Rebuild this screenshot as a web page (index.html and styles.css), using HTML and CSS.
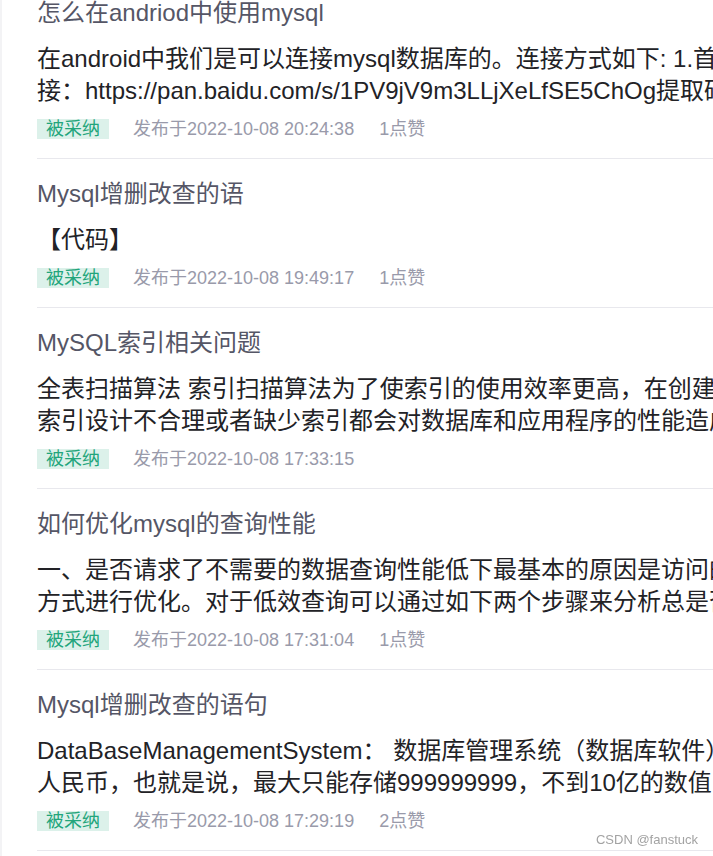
FILE: index.html
```html
<!DOCTYPE html>
<html lang="zh-CN">
<head>
  <meta charset="UTF-8">
  <meta name="viewport" content="width=device-width, initial-scale=1.0">
  <title>相关问答</title>
  <link rel="stylesheet" href="styles.css">
</head>
<body>
  <div class="answer-list">
    <div class="answer-item">
      <div class="answer-title">怎么在andriod中使用mysql</div>
      <div class="answer-desc">
        <p>在android中我们是可以连接mysql数据库的。连接方式如下: 1.首先下载mysql的驱动jar包，链</p>
        <p>接：https://pan.baidu.com/s/1PV9jV9m3LLjXeLfSE5ChOg提取码：mysq</p>
      </div>
      <div class="answer-meta">
        <span class="tag-adopted">被采纳</span>
        <span class="meta-time">发布于2022-10-08 20:24:38</span>
        <span class="meta-like">1点赞</span>
      </div>
    </div>

    <div class="answer-item">
      <div class="answer-title">Mysql增删改查的语</div>
      <div class="answer-desc">
        <p>【代码】</p>
      </div>
      <div class="answer-meta">
        <span class="tag-adopted">被采纳</span>
        <span class="meta-time">发布于2022-10-08 19:49:17</span>
        <span class="meta-like">1点赞</span>
      </div>
    </div>

    <div class="answer-item">
      <div class="answer-title">MySQL索引相关问题</div>
      <div class="answer-desc">
        <p>全表扫描算法 索引扫描算法为了使索引的使用效率更高，在创建索引时，必须考虑在哪些字段上</p>
        <p>索引设计不合理或者缺少索引都会对数据库和应用程序的性能造成障碍。高效的索引对于获得良好</p>
      </div>
      <div class="answer-meta">
        <span class="tag-adopted">被采纳</span>
        <span class="meta-time">发布于2022-10-08 17:33:15</span>
      </div>
    </div>

    <div class="answer-item">
      <div class="answer-title">如何优化mysql的查询性能</div>
      <div class="answer-desc">
        <p>一、是否请求了不需要的数据查询性能低下最基本的原因是访问的数据太多。大部分性能低下的</p>
        <p>方式进行优化。对于低效查询可以通过如下两个步骤来分析总是否有效：确认应用程序是否在检</p>
      </div>
      <div class="answer-meta">
        <span class="tag-adopted">被采纳</span>
        <span class="meta-time">发布于2022-10-08 17:31:04</span>
        <span class="meta-like">1点赞</span>
      </div>
    </div>

    <div class="answer-item">
      <div class="answer-title">Mysql增删改查的语句</div>
      <div class="answer-desc">
        <p>DataBaseManagementSystem： 数据库管理系统（数据库软件）</p>
        <p>人民币，也就是说，最大只能存储999999999，不到10亿的数值</p>
      </div>
      <div class="answer-meta">
        <span class="tag-adopted">被采纳</span>
        <span class="meta-time">发布于2022-10-08 17:29:19</span>
        <span class="meta-like">2点赞</span>
      </div>
    </div>
  </div>

  <div class="watermark">CSDN @fanstuck</div>
</body>
</html>
```

FILE: styles.css
```css
* {
  box-sizing: border-box;
}

html,
body {
  overflow: hidden;
}

body {
  margin: 0;
  min-height: 100vh;
  background: #ffffff;
  border-left: 2px solid #f3f3f5;
  font-family: 'Liberation Sans', 'Noto Sans CJK SC', sans-serif;
}

.answer-list {
  margin-top: -22px;
  padding-left: 35px;
}

.answer-item {
  padding: 19px 0 19px;
  border-bottom: 1px solid #e8e8ed;
}

.answer-title {
  font-size: 24px;
  line-height: 32px;
  color: #555666;
  white-space: nowrap;
}

.answer-desc {
  margin-top: 14px;
}

.answer-desc p {
  margin: 0;
  font-size: 24px;
  line-height: 32px;
  color: #222226;
  white-space: nowrap;
}

.answer-meta {
  margin-top: 12px;
  display: flex;
  align-items: center;
  height: 20px;
  font-size: 18px;
  line-height: 20px;
  color: #999aaa;
  white-space: nowrap;
}

.tag-adopted {
  display: inline-block;
  height: 20px;
  padding: 0 9px;
  margin-right: 24px;
  background: #dcf1ea;
  color: #22a57b;
}

.meta-time {
  margin-right: 25px;
}

.watermark {
  position: fixed;
  right: 15px;
  bottom: 9px;
  font-size: 13px;
  color: #a3a3a3;
  font-family: 'Liberation Sans', sans-serif;
}
```
